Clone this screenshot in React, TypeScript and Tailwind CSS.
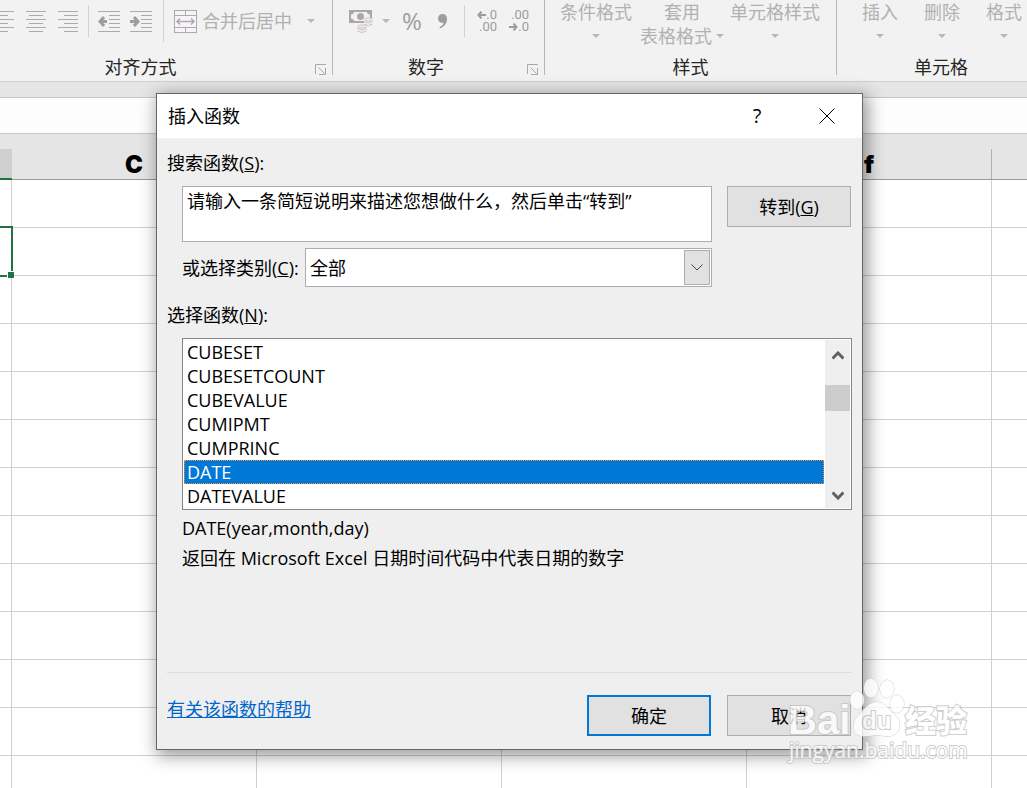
import React, { useState } from 'react';

const functionNames = ['CUBESET', 'CUBESETCOUNT', 'CUBEVALUE', 'CUMIPMT', 'CUMPRINC', 'DATE', 'DATEVALUE'];
const columns = ['C', 'd', 'e', 'f', ''];
const rows = Array.from({ length: 13 }, (_, i) => i);

const Caret = () => (
  <svg width="8" height="4" viewBox="0 0 8 4" className="shrink-0 fill-[#b8b8b8]" aria-hidden="true">
    <path d="M0 0h8L4 4z" />
  </svg>
);

const Launcher = ({ label }: { label: string }) => (
  <button aria-label={label} className="text-[#a8a8a8]">
    <svg width="12" height="11" viewBox="0 0 12 11" fill="none" stroke="currentColor">
      <path d="M.5 10V.5H11" />
      <path d="M3.5 3.5l6 6M10.5 4v6.5H4" />
    </svg>
  </button>
);

// Six stacked lines, given as [start, end] pairs
const LinesIcon = ({ lines }: { lines: number[][] }) => (
  <svg width="21" height="21" viewBox="0 0 21 21" stroke="#ababab" aria-hidden="true">
    {lines.map(([a, b], i) => (
      <path key={i} d={`M${a} ${i * 4 + 0.5}H${b}`} />
    ))}
  </svg>
);

const IndentIcon = ({ back }: { back?: boolean }) => (
  <svg width="22" height="21" viewBox="0 0 22 21" fill="none" stroke="#ababab" aria-hidden="true">
    <path d="M0 .5h22M11 4.500h11M11 8.500h11M11 12.500h11M11 16.500h11M0 20.500h22" />
    <path strokeWidth="3" stroke="#9d9d9d" d={back ? 'M6 6L2 10.500l4 4.500M2 10.500h7' : 'M4 6l4 4.500L4 15M8 10.500H0'} />
  </svg>
);

const MergeIcon = () => (
  <svg width="23" height="23" viewBox="0 0 23 23" fill="none" stroke="#ababab" aria-hidden="true">
    <rect x=".5" y=".5" width="22" height="22" fill="#f8f3f8" />
    <path d="M0 5.500h23M0 17.500h23M11.500 0v5.500M11.500 17.500V23" />
    <path strokeWidth="1.500" d="M3 11.500h17M6 8.500l-3 3 3 3M17 8.500l3 3-3 3" />
  </svg>
);

const MoneyIcon = () => (
  <svg width="24" height="23" viewBox="0 0 24 23" aria-hidden="true">
    <path fill="#a9a9a9" d="M0 0h23v13H0z" />
    <path fill="#f2f2f2" d="M5 2h13q0 2 3 2.500v4Q18 9 18 11H5Q5 9 2 8.500v-4Q5 4 5 2z" />
    <circle cx="11.500" cy="6.500" r="3.500" fill="#a9a9a9" />
    <path fill="#f2eef2" d="M15 8h9v9h-6v6H8v-8h7z" />
    <g fill="none" stroke="#c9c3c9">
      <ellipse cx="19.500" cy="9.500" rx="4" ry="1.500" />
      <path d="M15.500 11.500q4 3 8 0M15.500 14q4 3 8 0" />
      <ellipse cx="13" cy="16.500" rx="4.500" ry="1.500" />
      <path d="M8.500 18.500q4.500 3 9 0M8.500 21q4.500 3 9 0" />
    </g>
  </svg>
);

const SmallArrow = ({ back }: { back?: boolean }) => (
  <svg width="9" height="8" viewBox="0 0 9 8" fill="none" stroke="#9d9d9d" strokeWidth="2" aria-hidden="true">
    <path d={back ? 'M4.500 .5L1.500 4l3 3.500M1.500 4H9' : 'M4.500 .5l3 3.500-3 3.500M7.500 4H0'} />
  </svg>
);

const Divider = () => <span className="h-8 w-px bg-[#d2d2d2]" />;

interface BigButtonProps {
  lines: string[];
  className?: string;
}

const BigButton: React.FC<BigButtonProps> = ({ lines, className = '' }) => (
  <button className={`flex shrink-0 flex-col items-center leading-6 text-[#b1b1b1] ${className}`}>
    <span>{lines[0]}</span>
    <span className="flex h-6 items-center gap-1">
      {lines[1]}
      <Caret />
    </span>
  </button>
);

const Ribbon = () => (
  <header className="flex h-[82px] shrink-0 overflow-hidden border-b border-[#d0d0d0] bg-[#f2f2f2] text-[#262626]">
    <section className="flex h-[75px] w-[333px] shrink-0 flex-col border-r border-[#b5b5b5]">
      <div className="flex h-[42px] items-center">
        <button aria-label="左对齐" className="-ml-1.5">
          <LinesIcon lines={[[0, 20], [0, 14], [0, 20], [0, 14], [0, 20], [0, 14]]} />
        </button>
        <button aria-label="居中" className="ml-[11px]">
          <LinesIcon lines={[[0, 20], [3, 17], [0, 20], [3, 17], [0, 20], [3, 17]]} />
        </button>
        <button aria-label="右对齐" className="mr-[9px] ml-[11px]">
          <LinesIcon lines={[[0, 20], [6, 20], [0, 20], [6, 20], [0, 20], [6, 20]]} />
        </button>
        <Divider />
        <button aria-label="减少缩进量" className="ml-[9px]">
          <IndentIcon back />
        </button>
        <button aria-label="增加缩进量" className="mr-[11px] ml-2.5">
          <IndentIcon />
        </button>
        <span className="h-full w-px bg-[#d2d2d2]" />
        <button className="ml-2.5 flex items-center gap-[5px] text-[#b1b1b1]">
          <MergeIcon />
          <span>合并后居中</span>
          <span className="ml-2.5">
            <Caret />
          </span>
        </button>
      </div>
      <div className="flex flex-1 items-end pr-[5px]">
        <h2 className="flex-1 pr-[34px] text-center leading-4">对齐方式</h2>
        <Launcher label="对齐设置" />
      </div>
    </section>

    <section className="flex h-[75px] w-[212px] shrink-0 flex-col border-r border-[#b5b5b5]">
      <div className="flex h-[42px] items-center pl-4">
        <button aria-label="会计数字格式" className="flex items-center gap-[9px]">
          <MoneyIcon />
          <Caret />
        </button>
        <button className="ml-2.5 w-6 text-2xl text-[#9d9d9d]">%</button>
        <button aria-label="千位分隔样式" className="mr-4 ml-3.5">
          <svg width="10" height="15" viewBox="0 0 10 15" fill="#9d9d9d">
            <path d="M4.500 0C7.500 0 9 2 9 5c0 4.500-3 8-7 9.500L1.500 13C4 12 5.500 10.500 5.500 8.500 2.500 9.500 0 7.500 0 4.500 0 2 2 0 4.500 0z" />
          </svg>
        </button>
        <Divider />
        <button className="ml-2 flex w-6 flex-col items-end font-['Roboto',sans-serif] text-[13px] leading-3 text-[#9d9d9d]">
          <span className="flex items-center"><SmallArrow back />.0</span>
          <span>.00</span>
        </button>
        <button className="ml-2 flex w-6 flex-col items-end font-['Roboto',sans-serif] text-[13px] leading-3 text-[#9d9d9d]">
          <span>.00</span>
          <span className="flex items-center"><SmallArrow />.0</span>
        </button>
      </div>
      <div className="flex flex-1 items-end pr-[5px]">
        <h2 className="flex-1 pr-2 text-center leading-4">数字</h2>
        <Launcher label="数字设置" />
      </div>
    </section>

    <section className="flex h-[75px] w-[292px] shrink-0 flex-col border-r border-[#b5b5b5]">
      <div className="flex h-12 pl-3.5">
        <BigButton lines={['条件格式', '']} className="w-[74px]" />
        <BigButton lines={['套用', '表格格式']} className="ml-1.5 w-[86px]" />
        <BigButton lines={['单元格样式', '']} className="ml-1 w-[92px]" />
      </div>
      <h2 className="mt-auto text-center leading-4">样式</h2>
    </section>

    <section className="flex h-[75px] w-[208px] shrink-0 flex-col">
      <div className="flex h-12 gap-[22px] pl-[23px]">
        <BigButton lines={['插入', '']} className="w-10" />
        <BigButton lines={['删除', '']} className="w-10" />
        <BigButton lines={['格式', '']} className="w-10" />
      </div>
      <h2 className="mt-auto text-center leading-4">单元格</h2>
    </section>
  </header>
);

const Sheet = () => (
  <table className="w-[1237px] table-fixed border-separate border-spacing-0 bg-white">
    <colgroup>
      <col className="w-3" />
      {columns.map((_, i) => <col key={i} className="w-[245px]" />)}
    </colgroup>
    <thead>
      <tr className="h-[46px] bg-[#e5e5e5]">
        <th className="border-b-2 border-[#217346] bg-linear-to-b from-[#e5e5e5] from-34% to-[#cfcfcf] to-34% p-0" />
        {columns.map((c, i) => (
          <th key={i} className="border-b border-[#999999] p-0 align-bottom">
            <div className="flex h-[30px] items-center justify-center border-r border-[#b0b0b0] pt-0.5 font-['Inter',sans-serif] text-2xl font-black text-black">
              {c}
            </div>
          </th>
        ))}
      </tr>
    </thead>
    <tbody>
      {rows.map(r => (
        <tr key={r} className="h-12">
          <td className={r === 1 ? 'relative border-r border-b border-[#d0d0d0] p-0' : 'border-r border-b border-[#d0d0d0] p-0'}>
            {r === 1 && (
              <>
                <span className="absolute -inset-y-0.5 right-[-2px] left-0 border-y-2 border-r-2 border-[#217346]" />
                <span className="absolute right-[-3px] -bottom-[3px] size-[7px] border-t border-l border-white bg-[#217346]" />
              </>
            )}
          </td>
          {columns.map((_, i) => <td key={i} className="border-r border-b border-[#d0d0d0] p-0" />)}
        </tr>
      ))}
    </tbody>
  </table>
);

const InsertFunctionDialog = () => {
  const [selected, setSelected] = useState('DATE');

  return (
    <div
      role="dialog"
      aria-labelledby="dialog-title"
      className="absolute top-[93px] left-[156px] w-[707px] border border-[#666666] bg-[#efefef] leading-6 text-black shadow-[3px_4px_16px_2px_rgba(0,0,0,0.4)]"
    >
      <div className="flex h-11 items-center bg-white pl-[11px]">
        <h1 id="dialog-title" className="flex-1">插入函数</h1>
        <button aria-label="帮助" className="h-full w-[70px] text-xl">?</button>
        <button aria-label="关闭" className="flex h-full w-[70px] items-center justify-center">
          <svg width="16" height="16" viewBox="0 0 16 16" stroke="#000" fill="none">
            <path d="M.5 .5l15 15M15.500 .5l-15 15" />
          </svg>
        </button>
      </div>

      <div className="px-2.5 pt-[13px] pb-[13px]">
        <label htmlFor="search" className="block">搜索函数(<u>S</u>):</label>
        <div className="mt-[11px] flex items-start gap-[15px] pr-px pl-[15px]">
          <textarea
            id="search"
            className="block h-14 min-w-0 flex-1 resize-none border border-[#abadb3] bg-white px-1 py-0.5 outline-none"
            defaultValue="请输入一条简短说明来描述您想做什么，然后单击“转到”"
          />
          <button className="h-[41px] w-[124px] border border-[#adadad] bg-[#e1e1e1]">转到(<u>G</u>)</button>
        </div>

        <div className="mt-1.5 flex items-center pr-[140px] pl-[15px]">
          <label htmlFor="category" className="w-[123px] shrink-0 whitespace-nowrap">或选择类别(<u>C</u>):</label>
          <div className="relative flex-1">
            <select id="category" className="block h-[39px] w-full appearance-none border border-[#abadb3] bg-white px-1 outline-none">
              <option>全部</option>
            </select>
            <span className="pointer-events-none absolute inset-y-0.5 right-0.5 flex w-[26px] items-center justify-center border border-[#adadad] bg-[#e1e1e1]">
              <svg width="12" height="7" viewBox="0 0 12 7" fill="none" stroke="#444">
                <path d="M.5 .5L6 6 11.500 .5" />
              </svg>
            </span>
          </div>
        </div>

        <div id="list-label" className="mt-4">选择函数(<u>N</u>):</div>
        <div className="mt-[11px] ml-[15px] flex h-[172px] border border-[#828790] bg-white p-px">
          <ul role="listbox" aria-labelledby="list-label" className="mr-px flex-1">
            {functionNames.map(name => (
              <li
                key={name}
                role="option"
                aria-selected={selected === name}
                onClick={() => setSelected(name)}
                className={`h-6 border border-dotted px-0.5 leading-[22px] ${selected === name ? 'border-[#ff8728] bg-[#0078d7] text-white' : 'border-transparent'}`}
              >
                {name}
              </li>
            ))}
          </ul>
          <div className="flex w-[25px] flex-col items-center bg-[#efefef] text-[#606060]">
            <button aria-label="向上滚动" className="flex h-[30px] items-center">
              <svg width="12" height="9" viewBox="0 0 12 9" fill="none" stroke="currentColor" strokeWidth="3">
                <path d="M.5 7.500L6 2l5.500 5.500" />
              </svg>
            </button>
            <div className="mt-[15px] h-[26px] w-full bg-[#cdcdcd]" />
            <button aria-label="向下滚动" className="mt-auto flex h-[26px] items-center">
              <svg width="12" height="9" viewBox="0 0 12 9" fill="none" stroke="currentColor" strokeWidth="3">
                <path d="M.5 1.500L6 7l5.500-5.500" />
              </svg>
            </button>
          </div>
        </div>

        <div className="mt-1.5 h-[156px] space-y-1.5 pl-[15px]">
          <p>DATE(year,month,day)</p>
          <p>返回在 Microsoft Excel 日期时间代码中代表日期的数字</p>
        </div>

        <div className="flex items-start border-t border-[#dcdcdc] pt-[22px] pr-px">
          <a href="#help" className="mt-0.5 flex-1 text-[#0066cc] underline">有关该函数的帮助</a>
          <button className="h-[41px] w-[124px] border-2 border-[#0078d7] bg-[#e1e1e1]">确定</button>
          <button className="ml-4 h-[41px] w-[124px] border border-[#adadad] bg-[#e1e1e1]">取消</button>
        </div>
      </div>
    </div>
  );
};

const Watermark = () => (
  <svg
    width="200"
    height="100"
    viewBox="0 0 200 100"
    className="pointer-events-none absolute right-[47px] bottom-4 font-['Open_Sans','Noto_Sans_CJK_SC',sans-serif] opacity-80"
    fill="#fff"
    stroke="#c4c4c4"
    paintOrder="stroke"
  >
    <ellipse cx="77" cy="28" rx="7" ry="9" />
    <ellipse cx="91" cy="16" rx="7" ry="9.500" />
    <ellipse cx="107" cy="17" rx="7" ry="9" />
    <ellipse cx="117" cy="32" rx="7" ry="9" />
    <path d="M97 30c9 0 12 9 19 14 6 5 5 18-5 20-6 1-9-1-14-1s-10 2-16 1c-9-2-9-13-4-19 6-6 11-15 20-15z" />
    <g strokeWidth="2" className="font-['Liberation_Sans','Noto_Sans_CJK_SC',sans-serif]">
      <text x="8" y="62" fontSize="40" fontWeight="700">Bai</text>
      <text x="82" y="57" fontSize="24" fontWeight="700">du</text>
      <text x="125" y="60" fontSize="31" fontWeight="900">经验</text>
    </g>
    <text x="9" y="86" fontSize="21" strokeWidth="2">jingyan.baidu.com</text>
  </svg>
);

export default function App() {
  return (
    <div className="relative flex h-screen flex-col overflow-hidden bg-white font-['Open_Sans','Noto_Sans_CJK_SC',sans-serif] text-lg">
      <Ribbon />
      <div className="h-[15px] shrink-0 bg-[#e5e5e5]" />
      <div className="h-[37px] shrink-0 border-y border-[#c6c6c6] bg-[#fdfdfd]" />
      <Sheet />
      <InsertFunctionDialog />
      <Watermark />
    </div>
  );
}
